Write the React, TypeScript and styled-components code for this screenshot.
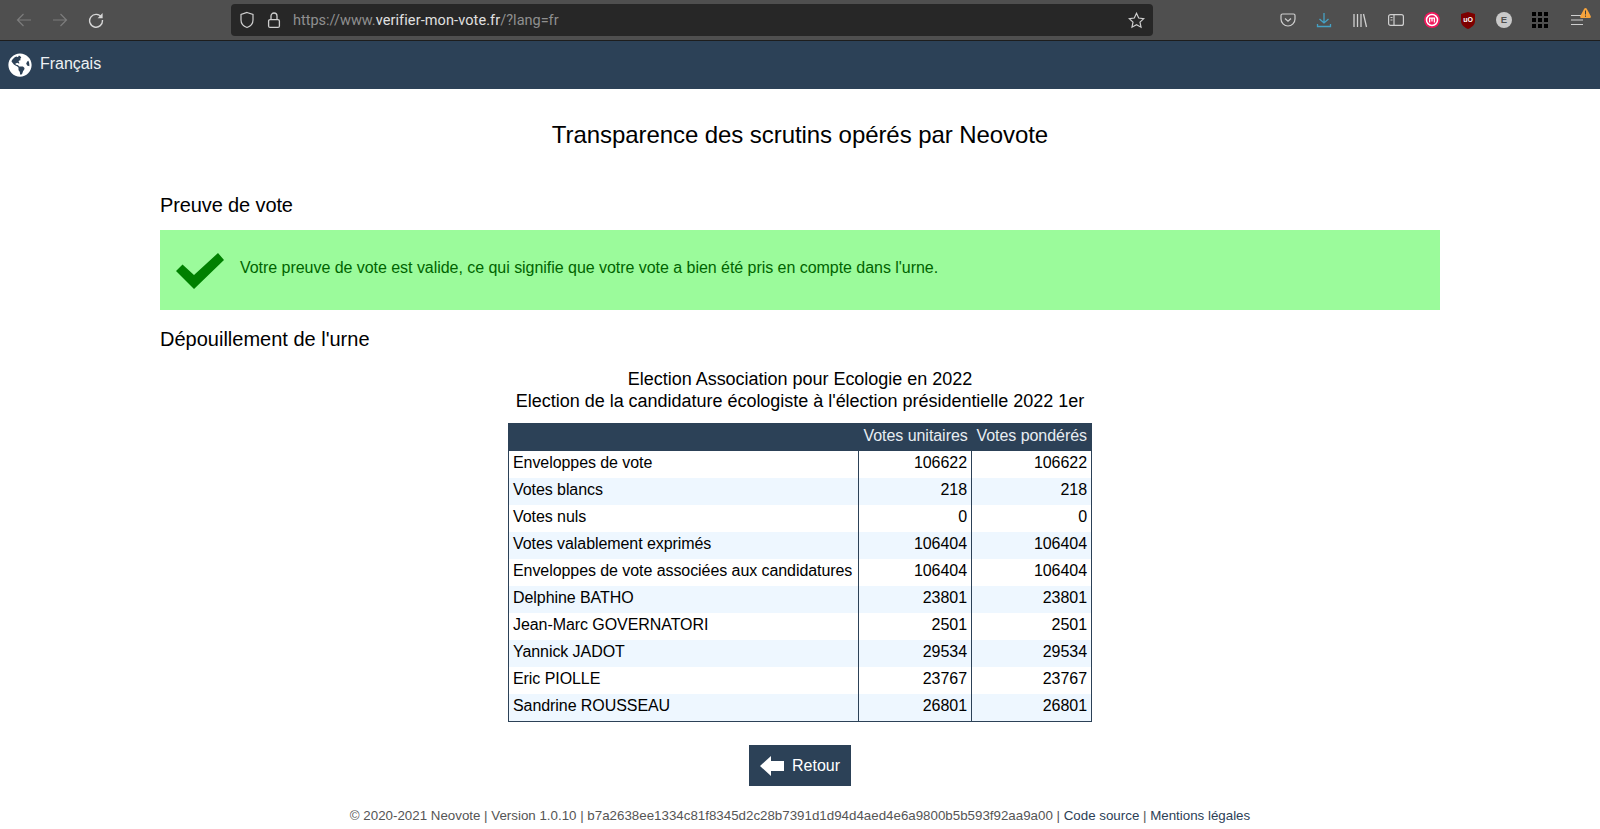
import React from "react";
import styled, { createGlobalStyle } from "styled-components";
import { FaGlobeAmericas } from "react-icons/fa";

const rows = [
  ["Enveloppes de vote", "106622", "106622"],
  ["Votes blancs", "218", "218"],
  ["Votes nuls", "0", "0"],
  ["Votes valablement exprimés", "106404", "106404"],
  ["Enveloppes de vote associées aux candidatures", "106404", "106404"],
  ["Delphine BATHO", "23801", "23801"],
  ["Jean-Marc GOVERNATORI", "2501", "2501"],
  ["Yannick JADOT", "29534", "29534"],
  ["Eric PIOLLE", "23767", "23767"],
  ["Sandrine ROUSSEAU", "26801", "26801"],
];

export default function App() {
  return (
    <>
      <GlobalStyle />
      <Toolbar>
        <NavIcons>
          <svg width="16" height="16" viewBox="0 0 16 16" fill="none" stroke="#7c7c7c" strokeWidth="1.2">
            <path d="M15 8H1.500M7.500 2L1.500 8l6 6" />
          </svg>
          <svg width="16" height="16" viewBox="0 0 16 16" fill="none" stroke="#7c7c7c" strokeWidth="1.2">
            <path d="M1 8h13.500M8.500 2l6 6-6 6" />
          </svg>
          <svg width="16" height="16" viewBox="0 0 16 16" fill="none" stroke="#d6d6d6" strokeWidth="1.4">
            <path d="M13.600 5.600A6.400 6.400 0 1 0 14.400 8" />
            <path d="M14.600 1v5.200H9.600z" fill="#d6d6d6" stroke="none" />
          </svg>
        </NavIcons>
        <UrlBar>
          <svg width="16" height="18" viewBox="0 0 16 18" fill="none" stroke="#cfcfcf" strokeWidth="1.2">
            <path d="M8 1.500l6 2v5.500c0 3.800-2.500 6.300-6 7.500-3.500-1.200-6-3.700-6-7.500V3.500z" />
          </svg>
          <svg width="16" height="18" viewBox="0 0 16 18" fill="none" stroke="#cfcfcf" strokeWidth="1.3">
            <rect x="2.600" y="8.600" width="10.800" height="7.800" rx="1.500" />
            <path d="M5 8.600V5a3 3 0 0 1 6 0v3.600" />
          </svg>
          <UrlText>
            https://www.<strong>verifier-mon-vote.fr</strong>/?lang=fr
          </UrlText>
          <svg width="17" height="17" viewBox="0 0 17 17" fill="none" stroke="#cfcfcf" strokeWidth="1.2">
            <path d="M8.500 1.300l2.200 4.700 5 .6-3.700 3.500 1 5.100-4.500-2.500-4.500 2.500 1-5.100L1.300 6.600l5-.6z" />
          </svg>
        </UrlBar>
        <AddonIcons>
          <svg width="16" height="16" viewBox="0 0 16 16" fill="none" stroke="#cfcfcf" strokeWidth="1.2">
            <path d="M2.500 2h11A1.500 1.500 0 0 1 15 3.500V7a7 7 0 0 1-14 0V3.500A1.500 1.500 0 0 1 2.500 2z" />
            <path d="M5 6.500L8 9.300l3-2.800" />
          </svg>
          <svg width="16" height="16" viewBox="0 0 16 16" fill="none" stroke="#45a1c4" strokeWidth="1.300">
            <path d="M8 1v10M3.500 7L8 11l4.500-4M1.500 12v2.500h13V12" />
          </svg>
          <svg width="16" height="16" viewBox="0 0 16 16" fill="none" stroke="#cfcfcf" strokeWidth="1.300">
            <path d="M2 2v13M5.500 2v13M9 2v13M11.500 2l3 13" />
          </svg>
          <svg width="16" height="16" viewBox="0 0 16 16" fill="none" stroke="#cfcfcf" strokeWidth="1.200">
            <rect x="0.600" y="2.600" width="14.800" height="10.800" rx="2" />
            <path d="M6 2.600v10.800M2.500 5.500h2M2.500 8h2" />
          </svg>
          <svg width="16" height="16" viewBox="0 0 16 16">
            <circle cx="8" cy="8" r="8" fill="#f0185c" />
            <circle cx="8" cy="8" r="5.500" fill="none" stroke="#fff" strokeWidth="1.500" />
            <path d="M5.600 10.500V6.200h4.800v4.300M8 6.200v3.300" fill="none" stroke="#fff" strokeWidth="1.300" />
          </svg>
          <svg width="16" height="17" viewBox="0 0 16 17">
            <path d="M8 0l7 2v7c0 4-3.500 6.500-7 8-3.500-1.500-7-4-7-8V2z" fill="#7d0000" />
            <text x="8" y="10.300" fontSize="7" fontWeight="700" fill="#fff" textAnchor="middle" fontFamily="Liberation Sans">uO</text>
          </svg>
          <svg width="16" height="16" viewBox="0 0 16 16">
            <circle cx="8" cy="8" r="8" fill="#c9c9c9" />
            <text x="8" y="11.300" fontSize="9.500" fontWeight="700" fill="#505050" textAnchor="middle" fontFamily="Liberation Sans">E</text>
          </svg>
          <AppsGrid>
            {Array.from({ length: 9 }).map((_, i) => (
              <AppsDot key={i} />
            ))}
          </AppsGrid>
          <MenuButton>
            <svg width="16" height="16" viewBox="0 0 16 16" fill="none" stroke="#cfcfcf" strokeWidth="1.200">
              <path d="M1 3.500h12M1 8h12M1 12.500h12" />
            </svg>
            <WarnBadge width="11" height="10" viewBox="0 0 11 10">
              <path d="M5.500 0c.6 0 1 .3 1.300.8l3.900 7.300c.4.8-.1 1.900-1.100 1.900H1.400C.4 10-.1 8.900.3 8.100L4.200.8C4.500.3 4.900 0 5.500 0z" fill="#f6a33c" />
              <path d="M5.500 2.500v4M5.500 7.500v1.300" stroke="#3c3c3c" strokeWidth="1" />
            </WarnBadge>
          </MenuButton>
        </AddonIcons>
      </Toolbar>

      <LangBar>
        <FaGlobeAmericas size={24} color="#fff" />
        <LangLabel>Français</LangLabel>
      </LangBar>

      <Main>
        <Title>Transparence des scrutins opérés par Neovote</Title>
        <ProofTitle>Preuve de vote</ProofTitle>
        <SuccessBox>
          <CheckMark width="48" height="36" viewBox="0 0 48 36" fill="#008000">
            <path d="M0 18L6.500 11.500 18 22 42 0 48 7 18 36z" />
          </CheckMark>
          <SuccessText>
            Votre preuve de vote est valide, ce qui signifie que votre vote a bien été pris en compte dans l'urne.
          </SuccessText>
        </SuccessBox>
        <SectionTitle>Dépouillement de l'urne</SectionTitle>
        <Caption>
          Election Association pour Ecologie en 2022
          <br />
          Election de la candidature écologiste à l'élection présidentielle 2022 1er
        </Caption>
        <TableWrap>
          <ResultTable>
            <colgroup>
              <Col $width={350} />
              <Col $width={113} />
              <Col $width={120} />
            </colgroup>
            <thead>
              <tr>
                <HeadCell />
                <HeadCell>Votes unitaires</HeadCell>
                <HeadCell>Votes pondérés</HeadCell>
              </tr>
            </thead>
            <tbody>
              {rows.map((row) => (
                <BodyRow key={row[0]}>
                  <LabelCell>{row[0]}</LabelCell>
                  <NumberCell>{row[1]}</NumberCell>
                  <NumberCell>{row[2]}</NumberCell>
                </BodyRow>
              ))}
            </tbody>
          </ResultTable>
        </TableWrap>
        <BackButton>
          <svg width="24" height="20" viewBox="0 0 24 20" fill="#fff">
            <path d="M0 10L11 0v5h13v10H11v5z" />
          </svg>
          Retour
        </BackButton>
        <Footer>
          © 2020-2021 Neovote | Version 1.0.10 | b7a2638ee1334c81f8345d2c28b7391d1d94d4aed4e6a9800b5b593f92aa9a00 |{" "}
          <FooterLink>Code source</FooterLink> | <FooterLink>Mentions légales</FooterLink>
        </Footer>
      </Main>
    </>
  );
}

const GlobalStyle = createGlobalStyle`
  html, body {
    margin: 0;
    padding: 0;
    background: #fff;
    color: #000;
    font-family: "Liberation Sans", Arial, sans-serif;
    overflow: hidden;
  }
`;

const Toolbar = styled.div`
  display: flex;
  align-items: center;
  height: 40px;
  background: #4f4f4f;
  border-bottom: 1px solid #1d1d1d;
`;

const NavIcons = styled.div`
  display: flex;
  align-items: center;
  gap: 20px;
  width: 231px;
  padding-left: 16px;
  box-sizing: border-box;
`;

const UrlBar = styled.div`
  display: flex;
  align-items: center;
  gap: 11px;
  width: 922px;
  height: 32px;
  padding: 0 8px;
  box-sizing: border-box;
  background: #272727;
  border-radius: 4px;
`;

const UrlText = styled.span`
  flex: 1;
  font-family: Roboto, sans-serif;
  font-size: 14.5px;
  color: #8f8f8f;

  strong {
    font-weight: 400;
    letter-spacing: 0.1px;
    color: #e0e0e0;
  }
`;

const AddonIcons = styled.div`
  display: flex;
  align-items: center;
  gap: 20px;
  margin-left: 127px;
`;

const AppsGrid = styled.div`
  display: grid;
  grid-template-columns: repeat(3, 4px);
  grid-auto-rows: 4px;
  gap: 2px;
`;

const AppsDot = styled.span`
  background: #000;
`;

const MenuButton = styled.div`
  position: relative;
  width: 16px;
  height: 16px;
  margin-left: 2px;
`;

const WarnBadge = styled.svg`
  position: absolute;
  top: -4px;
  left: 10px;
`;

const LangBar = styled.div`
  display: flex;
  align-items: center;
  gap: 8px;
  height: 48px;
  padding-left: 8px;
  background: #2c4157;
`;

const LangLabel = styled.span`
  padding-bottom: 2px;
  font-size: 16px;
  letter-spacing: -0.03px;
  color: #eef1f4;
`;

const Main = styled.main`
  display: flex;
  flex-direction: column;
  width: 1280px;
  margin: 0 auto;
`;

const Title = styled.h1`
  margin: 32px 0 0;
  font-size: 24px;
  font-weight: 400;
  line-height: 28px;
  letter-spacing: -0.07px;
  text-align: center;
`;

const SectionTitle = styled.h2`
  margin: 0;
  padding: 18px 0 12px;
  font-size: 20px;
  font-weight: 400;
  line-height: 23px;
`;

const ProofTitle = styled(SectionTitle)`
  margin-top: 26px;
  padding: 19px 0 13px;
  letter-spacing: -0.12px;
`;

const SuccessBox = styled.div`
  display: flex;
  align-items: center;
  gap: 16px;
  height: 80px;
  padding-left: 16px;
  background: #9bfb9b;
`;

const CheckMark = styled.svg`
  margin-top: 2px;
`;

const SuccessText = styled.span`
  padding-bottom: 4px;
  font-size: 16px;
  letter-spacing: -0.04px;
  color: #006400;
`;

const Caption = styled.div`
  margin-top: 5px;
  font-size: 18px;
  line-height: 22px;
  letter-spacing: -0.02px;
  text-align: center;
`;

const TableWrap = styled.div`
  display: flex;
  justify-content: center;
  margin-top: 11px;
`;

const ResultTable = styled.table`
  width: 584px;
  table-layout: fixed;
  border-collapse: collapse;
  border: 1px solid #2c4157;
  font-size: 16px;
`;

const Col = styled.col<{ $width: number }>`
  width: ${(p) => p.$width}px;
`;

const HeadCell = styled.th`
  box-sizing: border-box;
  height: 27px;
  padding: 0 4px 2px 5px;
  background: #2c4157;
  color: #e8edf2;
  font-weight: 400;
  letter-spacing: -0.05px;
  text-align: right;
  white-space: nowrap;
`;

const BodyRow = styled.tr`
  height: 27px;

  &:nth-child(even) {
    background: #eef7ff;
  }

  &:last-child {
    height: 28px;
  }
`;

const LabelCell = styled.td`
  padding: 0 4px 2px;
  letter-spacing: -0.07px;
  white-space: nowrap;
  border-right: 1px solid #2c4157;
`;

const NumberCell = styled.td`
  padding: 0 4px 2px 5px;
  text-align: right;
  letter-spacing: -0.05px;
  border-right: 1px solid #2c4157;
`;

const BackButton = styled.div`
  display: flex;
  align-items: center;
  align-self: center;
  gap: 8px;
  height: 41px;
  margin-top: 23px;
  padding: 0 11px;
  background: #2c4157;
  color: #fff;
  font-size: 16px;
`;

const Footer = styled.footer`
  margin-top: 22px;
  font-size: 13.33px;
  line-height: 16px;
  color: #555;
  text-align: center;
  white-space: nowrap;
`;

const FooterLink = styled.span`
  color: #2c4157;
`;
